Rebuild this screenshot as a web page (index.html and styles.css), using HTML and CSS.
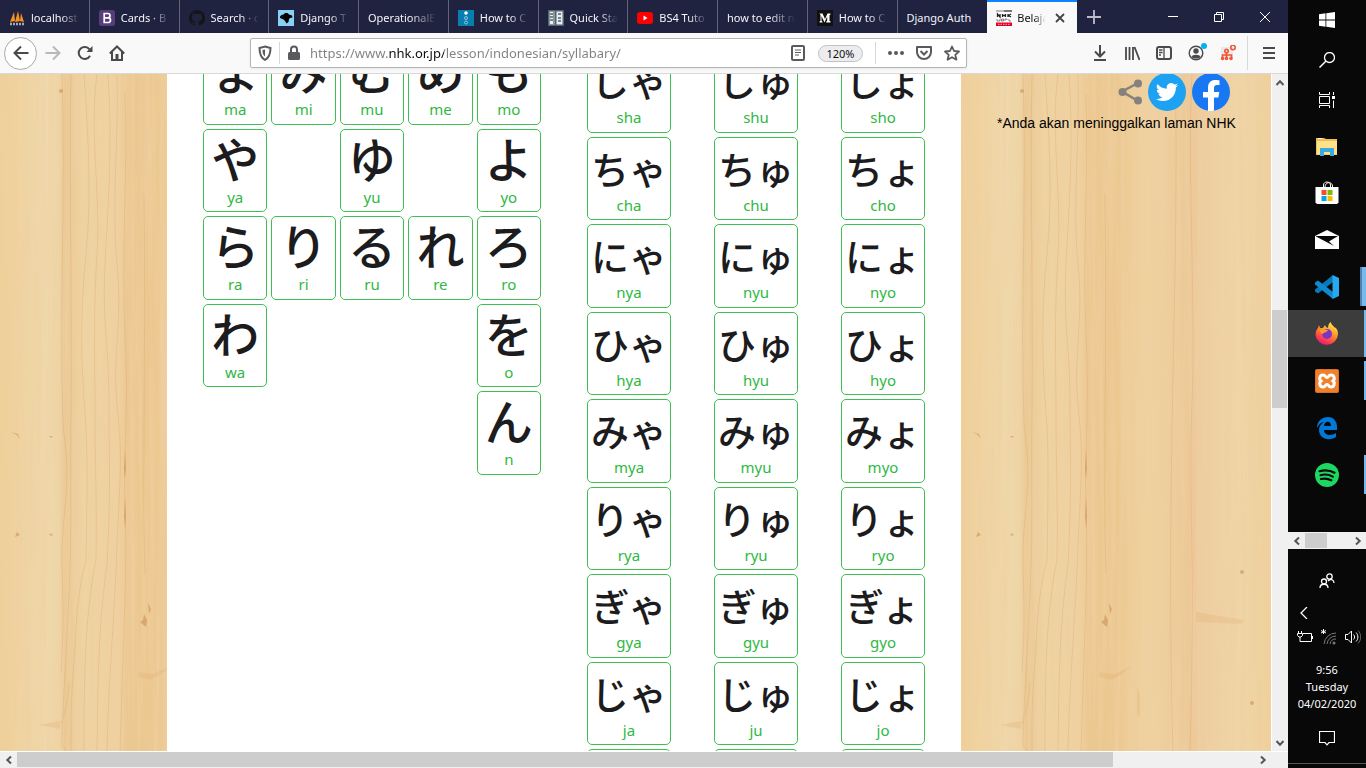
FILE: index.html
```html
<!DOCTYPE html>
<html lang="id">
<head>
<meta charset="utf-8">
<title>Belajar Bahasa Jepang</title>
<link rel="stylesheet" href="styles.css">
<script src="chart.js" defer></script>
</head>
<body>
<svg class="defs" aria-hidden="true">
  <defs>
    <filter id="grain" x="0" y="0" width="100%" height="100%">
      <feTurbulence type="fractalNoise" baseFrequency="0.2 0.005" numOctaves="4" seed="8"/>
      <feColorMatrix values="0 0 0 0 0.87  0 0 0 0 0.63  0 0 0 0 0.36  1.6 0 0 0 -0.6"/>
    </filter>
    <linearGradient id="planks">
      <stop offset="0" stop-color="#efcf98"/><stop offset="0.15" stop-color="#efd8ab"/>
      <stop offset="0.19" stop-color="#eed5a6"/><stop offset="0.21" stop-color="#eac893"/>
      <stop offset="0.27" stop-color="#efd3a2"/><stop offset="0.38" stop-color="#efd1a0"/>
      <stop offset="0.41" stop-color="#ecc891"/><stop offset="0.5" stop-color="#ecc890"/>
      <stop offset="0.6" stop-color="#efd2a0"/><stop offset="0.75" stop-color="#ecc797"/>
      <stop offset="0.77" stop-color="#edcda0"/><stop offset="0.9" stop-color="#efd5a7"/>
      <stop offset="1" stop-color="#efd09b"/>
    </linearGradient>
    <symbol id="wood" overflow="visible">
      <rect width="310" height="680" fill="url(#planks)"/>
      <rect width="310" height="680" filter="url(#grain)"/>
      <g fill="none" stroke="#d9a062" stroke-width="1" opacity="0.3">
        <path d="M62 0c4 120-3 230 1 350 1 14 4 28 4 48 0 30-6 60-5 90 1 50 2 60-1 110M71 0c-2 100 1 200 0 330s2 120-5 250-3 80 0 98"/>
        <path d="M84 0c4 60 8 120 2 180s-5 110-1 160c3 30 2 90 1 146-8 30-10 60-11 90-5 60-4 70-4 102"/>
        <path d="M97 0c-8 60 4 120 0 180s-2 110-2 160 2 90 1 146c-10 50-12 100-12 192M108 0c5 70 0 130-3 190s4 80 4 140 2 80-2 160c-8 60-9 100-10 188"/>
        <path d="M117 0c2 70-6 130 0 190s-5 90 0 140 4 60 0 140c-2 70-8 120-10 208M125 20c3 80-4 160 0 240s-2 120 0 170 0 90-5 248"/>
        <path d="M61 650c5-16 7-22 8-42M214 0c5 200-10 400-2 678M231 0c-5 100 4 220 0 330s4 130-2 348M144 120c2 160-2 290 1 380"/>
      </g>
      <g fill="#c98a50" opacity="0.55">
        <path d="M125 375l1 20-1 10-1-10zM125 422l1 20-1 14-1-14zM17 361l-6-3 7 2 2 5zM51 364l-2-2h4zM17 458l-2 5 5-2zM51 459l-2 2 4 1zM148 529l3 6-2 5zM144 540l3 6-1 7-6-5 3-2z"/>
        <circle cx="61" cy="17" r="2"/><circle cx="281" cy="498" r="2"/><circle cx="291" cy="629" r="2"/>
      </g>
      <g fill="#dda05e" opacity="0.2">
        <path d="M235 538l48 8-2 4-46-2zM138 598l15 2 18-8-13 10-9 4-11-3zM39 651l21-4v8zM176 613l3 8v22l-3-3z"/>
      </g>
    </symbol>
    <symbol id="left" viewBox="0 0 10 10"><path d="M7 1.5 3.3 5 7 8.5" fill="none" stroke="#555" stroke-width="2"/></symbol>
  </defs>
</svg>

<div class="desktop">
  <div class="browser">
    <header class="tabbar">
      <div class="tabs" role="tablist">
        <button class="tab" role="tab"><svg viewBox="0 0 16 16"><path d="M1 12 5 2l1 9zM6 12 9 1l2 10zM11 11l1-8 3 9z" fill="#f7931e"/><path d="M1 14h14" stroke="#aaa" stroke-width="2.5" stroke-dasharray="2 1"/></svg><span>localhost</span></button>
        <button class="tab" role="tab"><svg viewBox="0 0 16 16"><rect width="16" height="16" rx="2.5" fill="#563d7c"/><path d="M5.2 3.5h3.6a2.2 2.2 0 0 1 0 4.4H5.2zm0 4.4h4a2.3 2.3 0 0 1 0 4.6h-4z" fill="none" stroke="#fff" stroke-width="1.7"/></svg><span>Cards · B</span></button>
        <button class="tab" role="tab"><svg viewBox="0 0 16 16"><path fill="#151517" d="M8 0a8 8 0 0 0-2.500 15.600c.4.1.5-.2.5-.4v-1.400c-2.200.5-2.700-1-2.700-1-.4-.9-.9-1.200-.9-1.200-.7-.5.1-.5.1-.5.8.1 1.200.8 1.200.8.7 1.300 1.900.9 2.300.7.1-.5.3-.9.5-1.100C4.700 11.300 2.900 10.600 2.900 7.500c0-.9.3-1.600.8-2.100-.1-.2-.4-1 .1-2.100 0 0 .7-.2 2.200.8a7.500 7.500 0 0 1 4 0c1.500-1 2.200-.8 2.200-.8.4 1.100.2 1.900.1 2.100.5.5.8 1.200.8 2.100 0 3.100-1.900 3.700-3.700 3.900.3.300.6.8.6 1.500v2.300c0 .2.1.5.6.4A8 8 0 0 0 8 0z"/></svg><span>Search · c</span></button>
        <button class="tab" role="tab"><svg viewBox="0 0 16 16"><path fill="#88d0f5" d="M0 0h16v16H0z"/><path d="M2 6.500 3.500 5l2-.5L7 3h2.500L11 4.500l3 1 .5 2-2.500.5-1 1-.5 3-2 1.500L7 11 5.500 9.500 2 8z"/></svg><span>Django T</span></button>
        <button class="tab" role="tab"><span>OperationalE</span></button>
        <button class="tab" role="tab"><svg viewBox="0 0 16 16"><path fill="#087eaf" d="M0 0h16v16H0z"/><circle cx="8" cy="3" r="1.800" fill="#fff"/><g fill="none" stroke="#8cc5df"><circle cx="8" cy="8" r="1.500"/><circle cx="8" cy="12.500" r="1.500"/></g></svg><span>How to C</span></button>
        <button class="tab" role="tab"><svg viewBox="0 0 16 16"><path fill="#53626c" d="M0 0h16v16H0z"/><path fill="#8b979e" d="M1 1h6v14H1z"/><path fill="#e8edf0" d="M2 2h3v12H2zM8.500 1.500h6v13h-6z"/><path d="M2 4h3M2 7h3M2 10h3M10 4h3M10 8h3M10 11h3" stroke="#53626c" stroke-width="1.500"/></svg><span>Quick Sta</span></button>
        <button class="tab" role="tab"><svg viewBox="0 0 16 16"><rect y="2" width="16" height="12" rx="3" fill="#f00"/><path d="M6.500 5.500v5l4-2.500z" fill="#fff"/></svg><span>BS4 Tuto</span></button>
        <button class="tab" role="tab"><span>how to edit n</span></button>
        <button class="tab" role="tab"><svg viewBox="0 0 16 16"><path fill="#111" d="M0 0h16v16H0z"/><path d="M2.500 3.500h3L8 9l2.500-5.500h3v1l-1 .7v5.600l1 .7v1H9.200v-1l1-.7V6.500L7.500 12.500 4.500 6v4.800l1 1v.7h-3v-.7l1-1V5z" fill="#fff"/></svg><span>How to C</span></button>
        <button class="tab" role="tab"><span>Django Auth</span></button>
        <button class="tab active" role="tab" aria-selected="true"><svg viewBox="0 0 16 16"><path fill="#fff" d="M0 0h16v16H0z"/><path fill="#bbb" d="M0 0h8v2H0z"/><path fill="#777" d="M8 0h8v2H8z"/><path d="M1.500 7V4l2.500 3V4M6.500 4v3M9.500 4v3M6.500 5.500h3M12 4v3M15 4l-2.500 1.500L15 7" fill="none" stroke="#222" stroke-width="1.300"/><path d="M1 9v2h3V9M5.500 9h2v2h-2zM9 11V9h2v1M13 9v2h2" fill="none" stroke="#666" stroke-width=".8"/><path fill="#e60027" d="M0 12.500h16V16H0z"/><path d="M2 14.300h12" stroke="#ffb0b8" stroke-dasharray="1.500 1"/></svg><span>Belaja</span><svg class="close" viewBox="0 0 12 12"><path d="m2 2 8 8m0-8-8 8" stroke="#444" stroke-width="1.800"/></svg></button>
      </div>
      <button class="newtab" aria-label="Tab baru"><svg viewBox="0 0 14 14"><path d="M7 0v14M0 7h14" stroke="#bcbcc8" stroke-width="1.800"/></svg></button>
      <div class="window-buttons">
        <button aria-label="Minimize"><svg viewBox="0 0 10 10"><path d="M0 4.500h10" stroke="#fff"/></svg></button>
        <button aria-label="Restore"><svg viewBox="0 0 10 10"><path d="M.5 2.500h7v7h-7zM2.500 2.500v-2h7v7h-2" fill="none" stroke="#fff"/></svg></button>
        <button aria-label="Close"><svg viewBox="0 0 10 10"><path d="m0 0 10 10M10 0 0 10" stroke="#fff"/></svg></button>
      </div>
    </header>

    <nav class="toolbar">
      <div class="nav-buttons">
        <button class="back" aria-label="Kembali"><svg viewBox="0 0 16 16"><path d="M15.500 8H1.500M8 1.500 1.500 8 8 14.500" fill="none" stroke="#4a4a4c" stroke-width="2"/></svg></button>
        <button aria-label="Maju" disabled><svg viewBox="0 0 16 16"><path d="M.5 8h14M8 1.500 14.500 8 8 14.500" fill="none" stroke="#b8b8ba" stroke-width="2"/></svg></button>
        <button aria-label="Muat ulang"><svg viewBox="0 0 16 16"><path d="M13 10.800A6 6 0 1 1 12.500 4.300" fill="none" stroke="#4a4a4c" stroke-width="2"/><path d="M15.500 1v6h-6z" fill="#4a4a4c"/></svg></button>
        <button aria-label="Beranda"><svg viewBox="0 0 16 16"><path d="m.8 8.500 7.200-7 7.200 7M3 7v8h10V7" fill="none" stroke="#4a4a4c" stroke-width="2"/><path d="M6.500 9h3v6h-3z" fill="#4a4a4c"/></svg></button>
      </div>
      <div class="urlbar">
        <svg class="icon" viewBox="0 0 16 16"><path d="M8 1.500 13.500 3c0 6-1 9.500-5.500 12C3.500 12.500 2.500 9 2.500 3z" fill="none" stroke="#5a5a5c" stroke-width="2"/><path d="M8 4.500 5.500 5c0 3 .5 5 2.500 6.500z" fill="#5a5a5c"/></svg>
        <i class="rule"></i>
        <svg class="icon" viewBox="0 0 16 16"><path d="M5 7V4.500a3 3 0 0 1 6 0V7" fill="none" stroke="#5a5a5c" stroke-width="2"/><rect x="2" y="7" width="12" height="8" rx="1.500" fill="#5a5a5c"/></svg>
        <input class="address" type="text" aria-label="Alamat" value="https://www.nhk.or.jp/lesson/indonesian/syllabary/">
        <svg class="icon" viewBox="0 0 16 16"><rect x="2" y="1" width="12" height="14" rx="1" fill="none" stroke="#5a5a5c" stroke-width="2"/><path d="M5 5h6M5 7.500h6M5 10h4" stroke="#5a5a5c"/></svg>
        <button class="zoom">120%</button>
        <i class="rule"></i>
        <svg class="icon dots" viewBox="0 0 16 16" fill="#5a5a5c"><circle cx="2" cy="8" r="2"/><circle cx="8" cy="8" r="2"/><circle cx="14" cy="8" r="2"/></svg>
        <svg class="icon" viewBox="0 0 16 16"><path d="M1 2h14v5a7 7 0 0 1-14 0z" fill="none" stroke="#5a5a5c" stroke-width="2" stroke-linejoin="round"/><path d="m4.500 6 3.500 3.500L11.500 6" fill="none" stroke="#5a5a5c" stroke-width="2"/></svg>
        <svg class="icon star" viewBox="0 0 16 16"><path d="m8 1.500 2 4.500 5 .5-3.700 3.300 1.100 4.900L8 12.200l-4.400 2.500 1.100-4.900L1 6.500 6 6z" fill="none" stroke="#5a5a5c" stroke-width="1.800" stroke-linejoin="round"/></svg>
      </div>
      <div class="tools">
        <button aria-label="Unduhan"><svg viewBox="0 0 16 16"><path d="M8 0v11M3 6.500l5 5 5-5M2 15h12" fill="none" stroke="#4a4a4c" stroke-width="2"/></svg></button>
        <button aria-label="Pustaka"><svg viewBox="0 0 16 16"><path d="M2 2v13M5.500 2v13M9 2v13M10.500 2l5 13" fill="none" stroke="#4a4a4c" stroke-width="1.800"/></svg></button>
        <button aria-label="Bilah samping"><svg viewBox="0 0 16 16"><rect x="1" y="2" width="14" height="12" rx="2" fill="none" stroke="#4a4a4c" stroke-width="2"/><path d="M8 2v12M3 5h3.500M3 7.500h3.500M3 10h2" stroke="#4a4a4c" stroke-width="1.300"/></svg></button>
        <button aria-label="Akun" class="account"><svg viewBox="0 0 16 16"><circle cx="8" cy="8" r="6.800" fill="none" stroke="#4a4a4c" stroke-width="1.400"/><circle cx="8" cy="6" r="2.700" fill="#4a4a4c"/><path d="M3.500 12C4 9 12 9 12.500 12 10 14 6 14 3.500 12z" fill="#4a4a4c"/></svg></button>
        <button aria-label="Ekstensi"><svg viewBox="0 0 16 16"><path d="M1 2h12v12H1z" fill="#e9e9eb"/><g fill="none" stroke="#f25333" stroke-width="1.600"><path d="M6.500 7v6M2.500 13v-3h9v3"/><circle cx="6.500" cy="6" r="1.700"/><circle cx="2.500" cy="13.500" r="1"/><circle cx="6.500" cy="13.500" r="1"/><circle cx="11" cy="13.500" r="1"/><circle cx="13" cy="2.500" r="2.200"/></g></svg></button>
        <i class="rule tall"></i>
        <button aria-label="Menu"><svg viewBox="0 0 16 16"><path d="M2 3h12M2 8h12M2 13h12" stroke="#4a4a4c" stroke-width="2"/></svg></button>
      </div>
    </nav>

    <div class="viewport">
      <div class="page">
        <aside class="side side-left"><svg class="wood" aria-hidden="true"><use href="#wood"/></svg></aside>
        <main class="chart">
          <section class="kana basic" id="basic"></section>
          <section class="kana combined" id="combined"></section>
        </main>
        <aside class="side side-right"><svg class="wood" aria-hidden="true"><use href="#wood"/></svg>
          <div class="share">
            <div class="share-icons">
              <svg class="share-mark" viewBox="0 0 24 26"><path d="M20 4 4 12.500 20 22" fill="none" stroke="#85827e" stroke-width="2.500"/><g fill="#85827e"><circle cx="20" cy="4.500" r="4"/><circle cx="4.500" cy="13" r="4"/><circle cx="20" cy="21.500" r="4"/></g></svg>
              <a href="#" aria-label="Twitter"><svg viewBox="0 0 38 38"><circle cx="19" cy="19" r="19" fill="#1da1f2"/><path transform="translate(8 8) scale(.92)" fill="#fff" d="M23.950 4.570a10 10 0 0 1-2.820.780 4.960 4.960 0 0 0 2.160-2.720 9.900 9.900 0 0 1-3.130 1.180 4.920 4.920 0 0 0-8.380 4.480A13.900 13.900 0 0 1 1.640 3.160a4.920 4.920 0 0 0 1.520 6.570 4.900 4.900 0 0 1-2.230-.610v.060a4.920 4.920 0 0 0 3.950 4.830 5 5 0 0 1-2.210.080 4.940 4.940 0 0 0 4.600 3.420A9.870 9.870 0 0 1 0 19.540a14 14 0 0 0 7.550 2.210c9.050 0 14-7.500 14-13.980v-.640a9.900 9.900 0 0 0 2.400-2.560z"/></svg></a>
              <a href="#" aria-label="Facebook"><svg viewBox="0 0 38 38"><circle cx="19" cy="19" r="19" fill="#1877f2"/><path fill="#fff" d="M16 38V24.500h-5V19h5v-4.500C16 9.500 19 7 23.300 7c2 0 4.200.400 4.200.4V12h-2.400c-2.400 0-3.100 1.500-3.100 3v4h5.300l-.9 5.500H22V37.800c-2 .3-4 .3-6 .2z"/></svg></a>
            </div>
            <p>*Anda akan meninggalkan laman NHK</p>
          </div>
        </aside>
      </div>
      <div class="vbar">
        <button aria-label="Gulir ke atas"><svg class="up"><use href="#left"/></svg></button>
        <div class="vtrack"><div class="vthumb"></div></div>
        <button aria-label="Gulir ke bawah"><svg class="down"><use href="#left"/></svg></button>
      </div>
    </div>
    <div class="hbar">
      <button aria-label="Gulir ke kiri"><svg><use href="#left"/></svg></button>
      <div class="htrack"><div class="hthumb"></div></div>
      <button aria-label="Gulir ke kanan"><svg class="right"><use href="#left"/></svg></button>
      <div class="corner"></div>
    </div>
  </div>

  <div class="taskbar">
    <div class="system">
      <button aria-label="Start"><svg viewBox="0 0 16 16" fill="#fff"><path d="M0 2.200 6.500 1.300V7.600H0zM7.300 1.200 16 0v7.600H7.300zM0 8.400h6.500v6.300L0 13.800zM7.300 8.400H16V16l-8.700-1.200z"/></svg></button>
      <button aria-label="Search"><svg viewBox="0 0 16 16"><circle cx="10.500" cy="5.500" r="5" fill="none" stroke="#fff" stroke-width="1.300"/><path d="M7 9 .5 15.500" stroke="#fff" stroke-width="1.500"/></svg></button>
      <button aria-label="Task view"><svg viewBox="0 0 16 16"><path d="M.5 0v2.500h10V0M.5 4.500h10v7H.500zM.5 16v-2.500h10V16M14.500 0v3M14.500 8.500V16" fill="none" stroke="#fff"/><path d="M13 4h3v3h-3z" fill="#fff"/></svg></button>
    </div>
    <div class="apps">
      <button aria-label="File Explorer"><svg viewBox="0 0 24 24"><path d="M1 4h8l2 1h11v16H1z" fill="#eebe52"/><path d="M2 7h20v13.500H2z" fill="#ffe18b"/><path d="M3 4.500h4" stroke="#fff"/><path d="M5 22v-8h14v8h-4v-4H9v4z" fill="#3aa9df"/></svg></button>
      <button aria-label="Store"><svg viewBox="0 0 24 24"><path d="M8.500 6V4c0-4 7-4 7 0v2M10 6c0-5 7-6 7.500-1v1" fill="none" stroke="#fff"/><path d="M.5 6h23v15.500l-1.500 1.500H2L.5 21.500z" fill="#fff"/><path fill="#f25022" d="M6.500 9h5v5h-5z"/><path fill="#7fba00" d="M12.500 9h5v5h-5z"/><path fill="#00a4ef" d="M6.500 15h5v5h-5z"/><path fill="#ffb900" d="M12.500 15h5v5h-5z"/></svg></button>
      <button aria-label="Mail"><svg viewBox="0 0 24 24"><path d="M0 8 12 2l12 6v13H0z" fill="#fff"/><path d="M1 8h22l-9 5.500 5 4.500L1 8.500z" fill="#080808"/></svg></button>
      <button class="open double" aria-label="Visual Studio Code"><svg viewBox="0 0 24 24"><path d="M18 0v7L3 18.500 0 16.500v-2z" fill="#0879bd"/><path d="M3 5.500 18 17v7L0 9.500v-2z" fill="#1189cf"/><path d="m17.500 0 6.500 3v18l-6.500 3z" fill="#28a8ee"/></svg></button>
      <button class="open current" aria-label="Firefox"><svg viewBox="0 0 24 24"><defs><linearGradient id="fire" x1=".8" y1="0" x2=".3" y2="1"><stop stop-color="#fff44f"/><stop offset=".45" stop-color="#ff9328"/><stop offset=".8" stop-color="#ff3750"/><stop offset="1" stop-color="#e31587"/></linearGradient></defs><path d="M4 3l1 3 3 0 2-3 1 2 2 1c0-3 1-5 3-6 0 3 2 3 3 5 3 1 4 4 4 7a11.300 11.300 0 0 1-22.500 1C.5 9 2 7 3 6z" fill="url(#fire)"/><circle cx="12" cy="12" r="5" fill="#7b35c8"/><path d="M5 8c3-2 5 0 8 0-1 3-5 2-5 4-2 0-3-2-3-4z" fill="#ff9b22"/></svg></button>
      <button class="open" aria-label="XAMPP"><svg viewBox="0 0 24 24"><rect width="24" height="24" rx="2" fill="#d86f28"/><rect x="1" y="1" width="22" height="22" rx="1" fill="#ef812d"/><path d="M8 6c3 0 2 2.500 4 2.500S13 6 16 6s4.500 4 2 6c2.500 2 1 6-2 6s-2-2.500-4-2.500S11 18 8 18s-4.500-4-2-6C3.500 10 5 6 8 6z" fill="none" stroke="#fff" stroke-width="3"/></svg></button>
      <button aria-label="Edge"><svg viewBox="0 0 24 24"><path d="M2 12C2 5 7 1 13 1c6 0 9 5 9 10v3H9c0 6 8 6 12 3v4c-8 5-17 1-17-7 0-4 2-6 5-8-3 0-5 2-7 6zm7-2h7c0-5-6-6-7 0z" fill="#0078d7"/></svg></button>
      <button class="open" aria-label="Spotify"><svg viewBox="0 0 24 24"><circle cx="12" cy="12" r="12" fill="#1ed760"/><path d="M4.500 8.200c5-1.400 10.500-1 15 1.500M5.500 12.200c4-1.200 8.500-.7 12.300 1.400M6 16c3.500-.9 7-.5 10.300 1.200" fill="none" stroke="#090909" stroke-width="2.200" stroke-linecap="round"/></svg></button>
    </div>
    <div class="mini-bar">
      <button aria-label="Scroll left"><svg><use href="#left"/></svg></button>
      <div class="mini-track"><div class="mini-thumb"></div></div>
      <button aria-label="Scroll right"><svg class="right"><use href="#left"/></svg></button>
    </div>
    <div class="tray">
      <button class="people" aria-label="People"><svg viewBox="0 0 16 16" fill="none" stroke="#fff" stroke-width="1.300"><circle cx="10.500" cy="3.500" r="2.700"/><circle cx="5" cy="8.500" r="2.500"/><path d="M1 15c0-5 8-5 8 0M9 8c3-3 6-1 6 2"/></svg></button>
      <button class="more" aria-label="Hidden icons"><svg viewBox="0 0 12 12"><path d="M8 0 2 6l6 6" fill="none" stroke="#fff" stroke-width="1.300"/></svg></button>
      <div class="status">
        <svg viewBox="0 0 16 16" fill="none" stroke="#fff"><path d="M6 4.500h8.500v8H5M15.500 7v3M1.500 2v2M4.500 2v2M.5 4.500h5v2L4 8H2L.5 6.500zM3 8v4.500h3"/></svg>
        <svg viewBox="0 0 16 16"><path d="M2.500 0v5M0 1.500 5 4M5 1.500 0 4" stroke="#fff"/><g fill="none" stroke="#77777a"><path d="M3 15A12 12 0 0 1 15 4M6 15a9 9 0 0 1 9-8M9 15a6 6 0 0 1 6-5"/></g><circle cx="13" cy="14" r="1.500" fill="#777"/></svg>
        <svg viewBox="0 0 16 16" fill="none" stroke="#fff"><path d="M.5 5.500H3L6.500 2v12L3 10.500H.5zM8.500 5.500c1.500 1.500 1.500 3.500 0 5M11 3.500c2.500 2.500 2.500 6.500 0 9"/><path d="M13 1.500c3.500 3.500 3.500 9.500 0 13" stroke="#666"/></svg>
      </div>
      <div class="clock"><time>9:56</time><span>Tuesday</span><span>04/02/2020</span></div>
      <button class="notice" aria-label="Notifications"><svg viewBox="0 0 16 16"><path d="M.5 1.500h15v11H10l-2 2.300-2-2.300H.5z" fill="none" stroke="#fff" stroke-width="1.200"/></svg></button>
    </div>
  </div>
</div>
</body>
</html>
```

FILE: chart.js
```js
const basic = [
  ["ま", "ma"], ["み", "mi"], ["む", "mu"], ["め", "me"], ["も", "mo"],
  ["や", "ya"], null, ["ゆ", "yu"], null, ["よ", "yo"],
  ["ら", "ra"], ["り", "ri"], ["る", "ru"], ["れ", "re"], ["ろ", "ro"],
  ["わ", "wa"], null, null, null, ["を", "o"],
  null, null, null, null, ["ん", "n"]
];

const combined = [["し", "sh"], ["ち", "ch"], ["に", "ny"], ["ひ", "hy"], ["み", "my"], ["り", "ry"], ["ぎ", "gy"], ["じ", "j"]]
  .flatMap(([kana, roman]) => [["ゃ", "a"], ["ゅ", "u"], ["ょ", "o"]].map(([small, vowel]) => [kana + small, roman + vowel]))
  .concat([["", ""], ["", ""], ["", ""]]);

function fill(id, cells) {
  const section = document.getElementById(id);
  for (const cell of cells) {
    const box = document.createElement("div");
    if (cell) {
      box.className = "card";
      const kana = document.createElement("span");
      kana.className = "glyph";
      kana.lang = "ja";
      kana.textContent = cell[0];
      const roman = document.createElement("span");
      roman.className = "roman";
      roman.textContent = cell[1];
      box.append(kana, roman);
    }
    section.append(box);
  }
}

fill("basic", basic);
fill("combined", combined);
```

FILE: styles.css
```css
* { box-sizing: border-box; }
body { margin: 0; background: #080808; font-family: "Noto Sans", sans-serif; font-size: 11px; overflow: hidden; }
button { border: 0; padding: 0; background: none; font: inherit; color: inherit; display: flex; align-items: center; justify-content: center; }
svg { display: block; flex: none; }
.defs { position: absolute; width: 0; height: 0; }

.desktop { display: grid; grid-template-columns: minmax(0, 1fr) 78px; height: 100vh; }
.browser { display: flex; flex-direction: column; min-width: 0; min-height: 0; background: #f9f9fa; }

/* Tab strip */
.tabbar { display: flex; height: 33px; background: #202340; color: #f4f4fa; flex: none; }
.tabs { display: grid; grid-template-columns: repeat(12, minmax(0, 1fr)); flex: 0 1 1077px; min-width: 0; }
.tab { min-width: 0; justify-content: flex-start; gap: 6px; padding: 2px 4px 0 9px; border-right: 1px solid #62647a; }
.tab svg { width: 16px; height: 16px; }
.tab span { flex: 1 1 0; min-width: 0; text-align: left; white-space: nowrap; overflow: hidden; -webkit-mask-image: linear-gradient(to right, #000 55%, transparent 90%); mask-image: linear-gradient(to right, #000 55%, transparent 90%); }
.tab:nth-child(11) { border-right: 0; }
.tab:nth-child(11) span { -webkit-mask-image: none; mask-image: none; }
.tab.active { background: #f9f9fa; color: #111; border-right: 0; border-top: 2px solid #0a84ff; padding: 0 11px 0 9px; gap: 5px; }
.tab .close { width: 12px; height: 12px; }
.newtab { width: 34px; }
.newtab svg { width: 14px; height: 14px; }
.window-buttons { display: flex; margin-left: auto; }
.window-buttons button { width: 46px; }
.window-buttons svg { width: 10px; height: 10px; }

/* Toolbar */
.toolbar { display: flex; align-items: center; height: 41px; flex: none; border-bottom: 1px solid #d8d8da; background: #f9f9fa; }
.nav-buttons { display: flex; align-items: center; padding-left: 4px; width: 250px; }
.nav-buttons button { width: 32px; height: 32px; }
.nav-buttons .back { border: 1px solid #a9a9ab; border-radius: 50%; background: #fff; width: 33px; height: 33px; }
.nav-buttons svg, .tools svg, .icon { width: 16px; height: 16px; }
.urlbar { display: flex; align-items: center; gap: 6px; flex: 1 1 0; min-width: 0; height: 30px; padding: 0 6px; background: #fff; border: 1px solid #b5b5b7; border-radius: 2px; box-shadow: 0 1px 3px #0001; }
.rule { width: 1px; height: 22px; background: #d8d8da; flex: none; }
.address { flex: 1 1 0; min-width: 0; border: 0; padding: 0 0 0 2px; outline: 0; font: 13px "Noto Sans", sans-serif; color: transparent; background: linear-gradient(to right, #808082 80px, #0c0c0d 80px 136px, #808082 136px); -webkit-background-clip: text; background-clip: text; }
.zoom { width: 45px; height: 17px; margin: 0 6px; border: 1px solid #c2c2c4; border-radius: 9px; background: #ededf0; font-size: 11px; color: #111; }
.dots { margin: 0 6px; }
.star { margin-left: 6px; }
.tools { display: flex; align-items: center; width: 321px; justify-content: flex-end; padding-right: 3px; }
.tools button { width: 32px; height: 32px; }
.tall { height: 34px; margin: 0 5px 0 3px; }
.account { position: relative; }
.account::after { content: ""; position: absolute; width: 6px; height: 6px; right: 5px; top: 6px; border-radius: 50%; background: #00b3f4; }

/* Page */
.viewport { display: flex; flex: 1 1 0; min-height: 0; background: #fff; }
.page { display: flex; flex: 1 1 0; min-width: 0; overflow: hidden; }
.side { position: relative; overflow: hidden; background: #eecf9c; }
.side-left { flex: 167 1 0; }
.side-right { flex: 310 1 0; }
.wood { position: absolute; inset: 0; width: 100%; height: 100%; }
.chart { flex: 0 0 794px; display: flex; align-items: flex-start; justify-content: space-between; padding: 0 36px; background: #fff; }
.kana { display: grid; width: 338px; grid-auto-rows: 1fr; }
.basic { grid-template-columns: repeat(5, 1fr); gap: 4px; height: 434px; margin-top: -33px; }
.combined { grid-template-columns: repeat(3, 84px); justify-content: space-between; row-gap: 4px; height: 784px; margin-top: -25px; }
.card { display: flex; flex-direction: column; align-items: center; min-height: 0; overflow: hidden; border: 1px solid #3fbf52; border-radius: 5px; background: #fff; }
.glyph { font-family: "Noto Sans CJK JP", sans-serif; font-weight: 500; color: #1c1c1e; white-space: nowrap; height: 57px; }
.basic .glyph { font-size: 48px; line-height: 54px; }
.combined .glyph { font-size: 38px; line-height: 60px; }
.roman { font-size: 15px; line-height: 20px; color: #2eb843; }
.share { position: relative; padding: 0 36px; }
.share-icons { display: flex; align-items: center; justify-content: flex-end; gap: 6px; height: 36px; padding-right: 5px; }
.share-icons svg { width: 38px; height: 38px; }
.share-icons .share-mark { width: 24px; height: 26px; }
.share p { margin: 3px 0 0; font: 14px/20px "Liberation Sans", Arial, sans-serif; color: #000; white-space: nowrap; }

/* Scroll bars */
.vbar { display: flex; flex-direction: column; width: 17px; border-left: 1px solid #fff; background: #f0f0f0; }
.vbar button { height: 17px; }
.vtrack { flex: 1 1 0; padding: 219px 1px 0 0; }
.vthumb { height: 98px; background: #cdcdcd; }
.vbar svg, .hbar svg, .mini-bar svg { width: 10px; height: 10px; }
.up { transform: rotate(90deg); }
.down { transform: rotate(-90deg); }
.right { transform: rotate(180deg); }
.hbar { display: flex; height: 17px; flex: none; background: #f0f0f0; border-top: 1px solid #fff; }
.hbar button { width: 17px; }
.htrack { flex: 1 1 0; padding: 0 141px 1px 0; }
.hthumb { height: 100%; background: #cdcdcd; }
.corner { width: 17px; }

/* Taskbar */
.taskbar { display: flex; flex-direction: column; background: #080808; color: #fff; min-height: 0; }
.system button { width: 100%; height: 40px; }
.system svg { width: 16px; height: 16px; }
.apps { padding-top: 2px; }
.apps button { width: 100%; height: 47px; position: relative; }
.apps svg { width: 24px; height: 24px; }
.apps .current { background: #3c3c3c; }
.open::after { content: ""; position: absolute; right: 0; top: 4px; bottom: 4px; width: 2px; background: #76b9ed; }
.open.current::after { top: 0; bottom: 0; }
.open.double::after { width: 4px; border-left: 2px solid #5082ab; }
.mini-bar { display: flex; height: 17px; margin-top: auto; background: #f0f0f0; flex: none; }
.mini-bar button { width: 17px; }
.mini-track { flex: 1 1 0; }
.mini-thumb { width: 22px; height: 15px; margin-top: 1px; background: #cdcdcd; }
.tray { display: flex; flex-direction: column; height: 219px; padding-top: 16px; flex: none; }
.tray button { width: 100%; }
.tray button svg { width: 16px; height: 16px; }
.people { height: 32px; }
.tray .more { justify-content: flex-start; height: 32px; padding-left: 11px; }
.tray .more svg { width: 12px; height: 12px; }
.status { display: flex; gap: 6px; height: 16px; padding: 0 5px 0 9px; justify-content: space-between; }
.status svg { width: 16px; height: 16px; }
.clock { display: flex; flex-direction: column; align-items: center; margin-top: 16px; font-size: 11px; line-height: 17px; }
.notice { height: 36px; margin-top: 8px; }
.tray::after { content: ""; margin-top: 7px; height: 1px; background: #555; }
```
